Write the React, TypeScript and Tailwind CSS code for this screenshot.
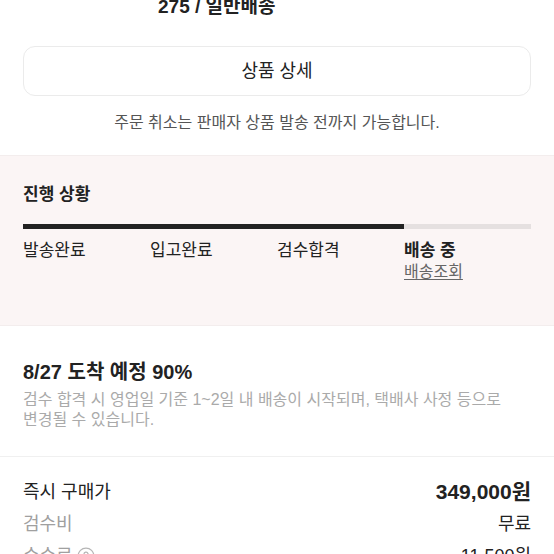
const font = { fontFamily: '"Liberation Sans", "Noto Sans CJK KR", sans-serif' }

const steps = ['발송완료', '입고완료', '검수합격', '배송 중']

export default function App() {
  return (
    <div
      className="w-[554px] h-[554px] overflow-hidden bg-white text-[#222]"
      style={font}
    >
      <div className="pl-[158px] -mt-[5px] text-[19px] leading-[24px] font-bold text-[#222]">
        275 / 일반배송
      </div>

      <div className="px-[23px] pt-[27px]">
        <button className="w-full h-[50px] rounded-[12px] border border-[#ebebeb] text-[18px] text-[#222] bg-white">
          상품 상세
        </button>
        <p className="mt-[17px] text-center text-[16px] leading-[20px] text-[#555]">
          주문 취소는 판매자 상품 발송 전까지 가능합니다.
        </p>
      </div>

      <section className="mt-[22px] h-[171px] bg-[#fbf5f5] border-y border-[#f3eded] px-[23px] pt-[27px]">
        <h3 className="text-[17px] leading-[24px] font-bold">진행 상황</h3>
        <div className="mt-[17px] h-[5px] bg-[#e5e0e0] flex">
          <div className="w-3/4 h-full bg-[#222]" />
        </div>
        <div className="grid grid-cols-4 mt-[11px]">
          {steps.map((s, i) => (
            <div key={s} className="flex flex-col">
              <span
                className={
                  i === 3
                    ? 'text-[17px] leading-[22px] font-bold text-[#222]'
                    : 'text-[17px] leading-[22px] text-[#222]'
                }
              >
                {s}
              </span>
              {i === 3 && (
                <span className="text-[16px] leading-[20px] text-[#666] underline underline-offset-2 w-fit">
                  배송조회
                </span>
              )}
            </div>
          ))}
        </div>
      </section>

      <section className="px-[23px] pt-[33px] pb-[26px] border-b border-[#f0f0f0]">
        <h3 className="text-[20px] leading-[26px] font-bold">8/27 도착 예정 90%</h3>
        <p className="mt-[5px] text-[16px] leading-[20px] text-[#aaa]">
          검수 합격 시 영업일 기준 1~2일 내 배송이 시작되며, 택배사 사정 등으로
          <br />
          변경될 수 있습니다.
        </p>
      </section>

      <section className="px-[23px] pt-[23px] flex flex-col gap-[8px]">
        <div className="flex justify-between items-center h-[24px]">
          <span className="text-[18px]">즉시 구매가</span>
          <span className="text-[21px] font-bold">349,000원</span>
        </div>
        <div className="flex justify-between items-center h-[24px]">
          <span className="text-[18px] text-[#a0a0a0]">검수비</span>
          <span className="text-[18px]">무료</span>
        </div>
        <div className="flex justify-between items-center h-[24px]">
          <span className="text-[18px] text-[#a0a0a0] flex items-center gap-[4px]">
            수수료
            <svg width="18" height="18" viewBox="0 0 16 16" fill="none" stroke="#b5b5b5" strokeWidth="1.1">
              <circle cx="8" cy="8" r="7" />
              <path d="M6.2 6.3a1.8 1.8 0 1 1 2.6 1.6c-.5.3-.8.6-.8 1.2v.4" />
              <circle cx="8" cy="11.5" r="0.5" fill="#b5b5b5" />
            </svg>
          </span>
          <span className="text-[18px]">11,500원</span>
        </div>
      </section>
    </div>
  )
}
